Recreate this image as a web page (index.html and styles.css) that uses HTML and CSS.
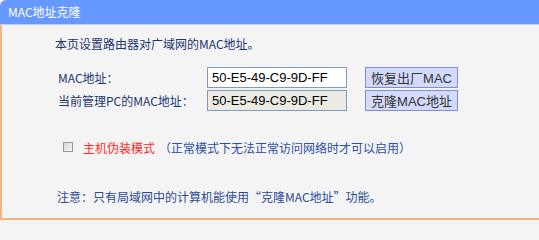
FILE: index.html
```html
<!DOCTYPE html>
<html lang="zh-CN">
<head>
<meta charset="utf-8">
<title>MAC地址克隆</title>
<link rel="stylesheet" href="styles.css">
</head>
<body>
<div class="page">
  <div class="header">MAC地址克隆</div>
  <div class="content">
    <p class="intro">本页设置路由器对广域网的MAC地址。</p>
    <div class="form">
      <label class="label" for="mac">MAC地址：</label>
      <input class="field" id="mac" type="text" value="50-E5-49-C9-9D-FF">
      <button class="btn" type="button">恢复出厂MAC</button>
      <label class="label" for="pcmac">当前管理PC的MAC地址：</label>
      <input class="field field-ro" id="pcmac" type="text" value="50-E5-49-C9-9D-FF" readonly>
      <button class="btn" type="button">克隆MAC地址</button>
    </div>
    <div class="mode">
      <span class="check"></span>
      <span class="mode-name">主机伪装模式</span>
      <span class="mode-hint">（正常模式下无法正常访问网络时才可以启用）</span>
    </div>
    <p class="note">注意：只有局域网中的计算机能使用“克隆MAC地址”功能。</p>
  </div>
</div>
</body>
</html>
```

FILE: styles.css
```css
html, body {
  margin: 0;
  padding: 0;
  background: #f4f4f4;
}
body {
  font-family: "Noto Sans CJK SC", "Liberation Sans", sans-serif;
  font-size: 12px;
  width: 539px;
  height: 222px;
  overflow: hidden;
}
.page {
  width: 539px;
}
.header {
  height: 24px;
  line-height: 24px;
  background: #6699ff;
  border-top-left-radius: 6px;
  border-bottom: 1px solid #b8ccff;
  color: #ffffff;
  padding-left: 8px;
  font-size: 12px;
}
.content {
  height: 182px;
  border-left: 2px solid #f5b47a;
  border-bottom: 2px solid #f7b37a;
  background: #f4f4f4;
  padding-top: 11px;
  box-sizing: content-box;
}
.intro {
  margin: 0 0 0 53px;
  line-height: 16px;
  color: #1c3470;
}
.form {
  display: grid;
  grid-template-columns: 131px 140px 93px;
  column-gap: 18px;
  row-gap: 2px;
  margin: 15px 0 0 56px;
  align-items: center;
}
.label {
  color: #1c3470;
  line-height: 21px;
  white-space: nowrap;
}
.field {
  box-sizing: border-box;
  width: 140px;
  height: 21px;
  margin: 0;
  padding: 0 4px;
  border: 1px solid #7f9db9;
  background: #ffffff;
  font-family: "Liberation Sans", Arial, sans-serif;
  font-size: 13px;
  color: #000000;
  outline: none;
}
.field-ro {
  background: #ecebe3;
}
.btn {
  box-sizing: border-box;
  width: 93px;
  height: 21px;
  margin: 0;
  padding: 0;
  border: 1px solid #7d8be2;
  background: #d4dafc;
  font-family: "Liberation Sans", "Noto Sans CJK SC", sans-serif;
  font-size: 13px;
  color: #333333;
}
.mode {
  display: flex;
  align-items: center;
  margin: 28px 0 0 61px;
  height: 16px;
}
.check {
  box-sizing: border-box;
  width: 10px;
  height: 10px;
  border: 1px solid #9a9a9a;
  background: linear-gradient(135deg, #d6d6d6, #f8f8f8);
  margin-right: 10px;
}
.mode-name {
  color: #ff2a2a;
  font-size: 12px;
}
.mode-hint {
  color: #2d4fa6;
  margin-left: 4px;
}
.note {
  margin: 34px 0 0 55px;
  line-height: 16px;
  color: #2d4a96;
}
```
